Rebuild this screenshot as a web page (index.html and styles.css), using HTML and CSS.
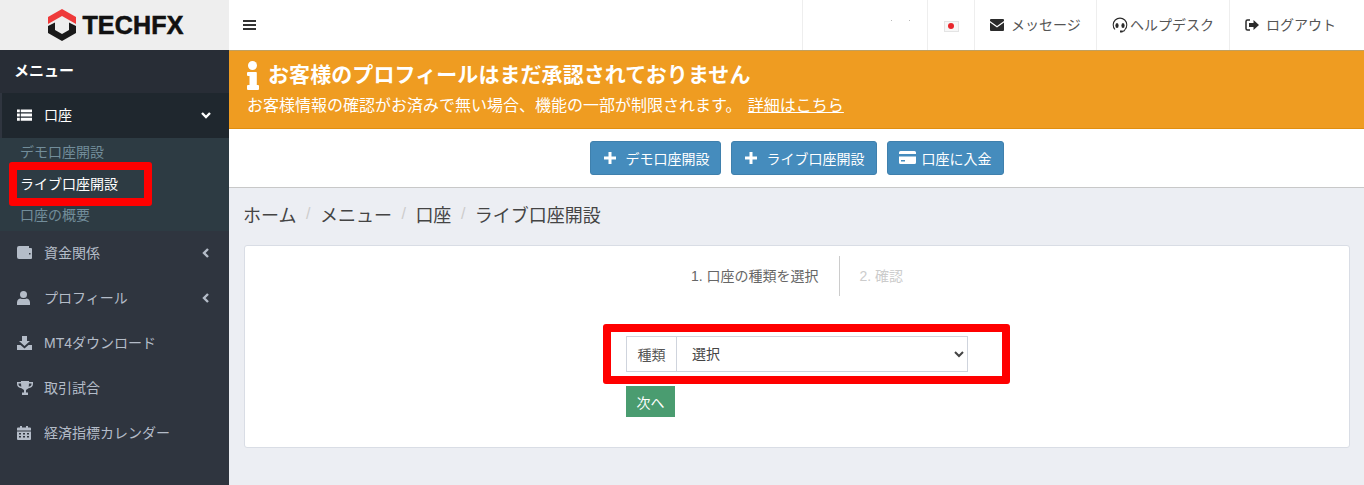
FILE: index.html
```html
<!DOCTYPE html>
<html lang="ja">
<head>
<meta charset="utf-8">
<title>TECHFX</title>
<link rel="stylesheet" href="styles.css">
</head>
<body>
<div class="app">
  <aside class="sidebar">
    <div class="logo">
      <svg class="logo-mark" width="28" height="32" viewBox="0 0 28 32">
        <path fill="#ee3a3a" d="M14 0 28 8V15L14 7 0 15V8Z"/>
        <path fill="#1a1a1a" d="M0 17 7 13.500V21L14 25 21 21V13.500L28 17V24L14 32 0 24Z"/>
      </svg>
      <span class="logo-text">TECHFX</span>
    </div>
    <div class="menu-title">メニュー</div>
    <div class="nav-item open">
      <svg class="ico" viewBox="0 0 16 14" width="15" height="14"><path fill="currentColor" d="M0 1h3v3H0zM4 1h12v3H4zM0 5.500h3v3H0zM4 5.500h12v3H4zM0 10h3v3H0zM4 10h12v3H4z"/></svg>
      <span class="nav-label">口座</span>
      <svg class="chev" viewBox="0 0 10 10" width="10" height="10"><path fill="none" stroke="currentColor" stroke-width="2.400" d="M1 3 5 7 9 3"/></svg>
    </div>
    <div class="submenu">
      <a class="sub-link">デモ口座開設</a>
      <a class="sub-link active">ライブ口座開設</a>
      <a class="sub-link">口座の概要</a>
    </div>
    <div class="nav-item">
      <svg class="ico" viewBox="0 0 15 14" width="15" height="14"><path fill="currentColor" d="M2 0h10v2h2a1 1 0 0 1 1 1v9a1 1 0 0 1-1 1H2a2 2 0 0 1-2-2V2a2 2 0 0 1 2-2zM12 7v1.500h1.500V7z"/></svg>
      <span class="nav-label">資金関係</span>
      <svg class="chev" viewBox="0 0 10 10" width="10" height="10"><path fill="none" stroke="currentColor" stroke-width="2.400" d="M7 1 3 5 7 9"/></svg>
    </div>
    <div class="nav-item">
      <svg class="ico" viewBox="0 0 15 14" width="15" height="14"><circle fill="currentColor" cx="6.500" cy="3.500" r="3.500"/><path fill="currentColor" d="M0 14v-2.500C0 9 2 7.500 3.500 7.500c1 .7 5 .7 6 0C11 7.500 13 9 13 11.500V14z"/></svg>
      <span class="nav-label">プロフィール</span>
      <svg class="chev" viewBox="0 0 10 10" width="10" height="10"><path fill="none" stroke="currentColor" stroke-width="2.400" d="M7 1 3 5 7 9"/></svg>
    </div>
    <div class="nav-item">
      <svg class="ico" viewBox="0 0 15 14" width="15" height="14"><path fill="currentColor" d="M5 0h5v5h3L7.500 10 2 5h3zM0 9h3.500l4 3.500 4-3.500H15v5H0z"/></svg>
      <span class="nav-label">MT4ダウンロード</span>
    </div>
    <div class="nav-item">
      <svg class="ico" viewBox="0 0 16 14" width="16" height="14"><path fill="currentColor" d="M4 0h8v1h4v2c0 2.500-2 4-4.500 4.300L9 9v2.500h2V14H5v-2.500h2V9L4.500 7.300C2 7 0 5.500 0 3V1h4zM1.500 2.500V3c0 1.500 1 2.300 2.800 2.700L4 2.500zM12 2.500l-.3 3.200C13.500 5.300 14.500 4.500 14.500 3v-.5z"/></svg>
      <span class="nav-label">取引試合</span>
    </div>
    <div class="nav-item">
      <svg class="ico" viewBox="0 0 14 14" width="14" height="14"><path fill="currentColor" d="M3 0h2v1.500h4V0h2v1.500h2a1 1 0 0 1 1 1V4.500H0V2.500a1 1 0 0 1 1-1h2zM0 5.500h14V13a1 1 0 0 1-1 1H1a1 1 0 0 1-1-1zM2 7v1.500h2V7zM6 7v1.500h2V7zM10 7v1.500h2V7zM2 10v1.500h2V10zM6 10v1.500h2V10zM10 10v1.500h2V10z"/></svg>
      <span class="nav-label">経済指標カレンダー</span>
    </div>
  </aside>

  <main class="main">
    <header class="topbar">
      <svg class="burger" viewBox="0 0 13 12" width="13" height="12"><path fill="#333" d="M0 1h13v2H0zM0 5h13v2H0zM0 9h13v2H0z"/></svg>
      <nav class="top-items">
        <div class="top-item user"><span class="speck"></span><span class="speck"></span></div>
        <div class="top-item flag-cell">
          <span class="flag"><span class="flag-dot"></span></span>
        </div>
        <div class="top-item msg">
          <svg viewBox="0 0 14 12" width="14" height="12"><path fill="#2b2b2b" d="M1 0h12a1 1 0 0 1 1 1v1L7 7 0 2V1a1 1 0 0 1 1-1zM0 3.500 7 8.500l7-5V11a1 1 0 0 1-1 1H1a1 1 0 0 1-1-1z"/></svg>
          <span class="top-label">メッセージ</span>
        </div>
        <div class="top-item help">
          <svg viewBox="0 0 16 16" width="16" height="16"><path fill="none" stroke="#2b2b2b" stroke-width="1.100" d="M3 12.500A6.800 6.800 0 1 1 13 12.500"/><ellipse fill="#2b2b2b" cx="5" cy="8.500" rx="1.600" ry="2.600"/><ellipse fill="#2b2b2b" cx="11" cy="8.500" rx="1.600" ry="2.600"/><path fill="none" stroke="#2b2b2b" stroke-width="1.100" d="M13 12.500C12.500 14 11.500 14.500 10 14.500"/><path fill="#2b2b2b" d="M8 13.500h2.500V15.500H8z"/></svg>
          <span class="top-label help-label">ヘルプデスク</span>
        </div>
        <div class="top-item logout">
          <svg viewBox="0 0 14 12" width="14" height="12"><path fill="none" stroke="#2b2b2b" stroke-width="1.500" d="M5 1H2.500A1.500 1.500 0 0 0 1 2.500v7A1.500 1.500 0 0 0 2.500 11H5"/><path fill="#2b2b2b" d="M4 4h4.500V1L14 6 8.500 11V8H4z"/></svg>
          <span class="top-label">ログアウト</span>
        </div>
      </nav>
    </header>

    <section class="alert">
      <h2 class="alert-title">
        <svg class="alert-i" viewBox="0 0 12 29" width="12" height="29"><circle fill="#fff" cx="5.500" cy="4.500" r="4.500"/><path fill="#fff" d="M1 11h8a.8.8 0 0 1 .8.8V24H11a1 1 0 0 1 1 1v3a1 1 0 0 1-1 1H1a1 1 0 0 1-1-1v-3a1 1 0 0 1 1-1h1.500V15H1a1 1 0 0 1-1-1v-2a1 1 0 0 1 1-1z"/></svg>
        お客様のプロフィールはまだ承認されておりません
      </h2>
      <p class="alert-text">お客様情報の確認がお済みで無い場合、機能の一部が制限されます。 <a class="alert-link">詳細はこちら</a></p>
    </section>

    <section class="toolbar">
      <a class="btn btn-demo"><svg viewBox="0 0 12 12" width="12" height="12"><path fill="#fff" d="M4.500 0h3v4.500H12v3H7.500V12h-3V7.500H0v-3h4.500z"/></svg><span class="btn-gap">デモ口座開設</span></a>
      <a class="btn"><svg viewBox="0 0 12 12" width="12" height="12"><path fill="#fff" d="M4.500 0h3v4.500H12v3H7.500V12h-3V7.500H0v-3h4.500z"/></svg><span class="btn-gap">ライブ口座開設</span></a>
      <a class="btn btn-deposit"><svg viewBox="0 0 17 13" width="17" height="13"><path fill="#fff" d="M1.500 0h14A1.500 1.500 0 0 1 17 1.500V3H0V1.500A1.500 1.500 0 0 1 1.500 0zM0 5.500h17v6a1.500 1.500 0 0 1-1.500 1.500h-14A1.500 1.500 0 0 1 0 11.500zM2 9v1.500h4V9z"/></svg><span class="btn-gap-s">口座に入金</span></a>
    </section>

    <nav class="crumbs">
      <span>ホーム</span><i>/</i><span>メニュー</span><i>/</i><span>口座</span><i>/</i><span>ライブ口座開設</span>
    </nav>

    <section class="card">
      <div class="steps">
        <div class="step current">1. 口座の種類を選択</div>
        <div class="step next">2. 確認</div>
      </div>
      <form class="form">
        <div class="input-group">
          <span class="addon">種類</span>
          <select class="select"><option>選択</option></select>
        </div>
        <button class="next-btn" type="button">次へ</button>
      </form>
    </section>
  </main>
</div>
<div class="mark mark-side"></div>
<div class="mark mark-form"></div>
</body>
</html>
```
FILE: styles.css
```css
* { box-sizing: border-box; }
html, body { margin: 0; height: 100%; overflow: hidden; }
body {
  font-family: "Liberation Sans", "Noto Sans CJK JP", sans-serif;
  font-size: 14px;
  color: #333;
  background: #eceef3;
}
.app { display: flex; height: 485px; }

/* sidebar */
.sidebar { width: 229px; flex: none; background: #2f353f; color: #a7b1c2; }
.logo {
  height: 50px;
  background: #eeeeee;
  display: flex;
  align-items: center;
  justify-content: center;
  gap: 6px;
  padding-left: 3px;
}
.logo-mark { display: block; }
.logo-text {
  font-family: "Liberation Sans", sans-serif;
  font-weight: 700;
  font-size: 25px;
  letter-spacing: .2px;
  color: #111;
  -webkit-text-stroke: .6px #111;
}
.menu-title {
  height: 43px;
  padding-left: 14px;
  line-height: 41px;
  font-weight: 700;
  font-size: 15px;
  color: #fff;
  background: #282d36;
}
.nav-item {
  height: 45px;
  display: grid;
  grid-template-columns: 15px 1fr auto;
  column-gap: 12px;
  align-items: center;
  padding: 0 18px 0 17px;
  color: #b4bcc8;
}
.nav-item.open { background: #1f272e; color: #fff; margin-left: 2px; padding-left: 15px; }
.ico { display: block; margin-bottom: 1px; }
.nav-label { white-space: nowrap; margin-bottom: 3px; }
.chev { display: block; margin-bottom: 1px; }
.submenu {
  background: #2d3b43;
  height: 93px;
  padding: 4px 0 5px 20px;
  display: flex;
  flex-direction: column;
  justify-content: space-between;
}
.sub-link { display: block; line-height: 21px; color: #728d9a; }
.sub-link.active { color: #fff; }

/* main */
.main { flex: 1; min-width: 0; display: flex; flex-direction: column; }
.topbar {
  height: 51px;
  flex: none;
  background: #fff;
  display: flex;
  align-items: center;
  justify-content: space-between;
  padding-left: 14px;
  border-bottom: 1px solid #c0a060;
}
.burger { display: block; }
.top-items { display: flex; height: 100%; }
.top-item {
  display: flex;
  align-items: center;
  border-left: 1px solid #eeeeee;
  height: 100%;
  color: #555;
}
.user { width: 125px; padding: 0 17px 10px 88px; gap: 17px; }
.speck { width: 2px; height: 1px; background: #bbb; }
.flag-cell { width: 47px; justify-content: center; }
.flag {
  width: 15px;
  height: 11px;
  background: #f7f7f7;
  border: 1px solid #e4e4e4;
  display: flex;
  align-items: center;
  justify-content: center;
  margin-top: 2px;
}
.flag-dot { width: 6px; height: 6px; border-radius: 50%; background: #e8262c; }
.msg { width: 122px; padding-left: 15px; }
.help { width: 133px; padding-left: 15px; }
.logout { width: 135px; padding-left: 15px; }
.top-label { margin-left: 7px; padding-bottom: 2px; }
.help-label { margin-left: 2px; }

/* alert */
.alert {
  height: 78px;
  flex: none;
  background: #ef9c21;
  color: #fff;
  padding: 9px 18px 0;
  border-bottom: 1px solid #e08e10;
}
.alert-title {
  margin: 0;
  display: flex;
  align-items: center;
  font-size: 21px;
  line-height: 30px;
  font-weight: 700;
  letter-spacing: .08px;
}
.alert-i { flex: none; margin-right: 9px; }
.alert-text { margin: 4px 0 0; font-size: 16px; line-height: 24px; }
.alert-link { text-decoration: underline; margin-left: 2px; }

/* toolbar */
.toolbar {
  height: 59px;
  flex: none;
  background: #fff;
  border-bottom: 1px solid #c8c8c8;
  display: flex;
  justify-content: center;
  align-items: center;
  gap: 10px;
  padding-bottom: 1px;
}
.btn {
  height: 34px;
  display: flex;
  align-items: center;
  padding: 0 11px 0 13px;
  background: #458cbd;
  border: 1px solid #3f80ad;
  border-radius: 3px;
  color: #fff;
  white-space: nowrap;
}
.btn-demo { padding-right: 10px; }
.btn-deposit { padding-left: 11px; }
.btn-gap { margin-left: 10px; }
.btn-gap-s { margin-left: 6px; }

/* breadcrumb */
.crumbs {
  flex: none;
  height: 57px;
  display: flex;
  align-items: center;
  padding: 0 0 5px 14px;
  font-size: 18px;
  color: #444;
}
.crumbs i { font-style: normal; color: #ccc; margin: 0 9.500px; font-size: 16px; }

/* card */
.card {
  margin: 0 14px 0 15px;
  height: 203px;
  background: #fff;
  border: 1px solid #d9dde5;
  border-radius: 3px;
  flex: none;
}
.steps {
  display: flex;
  justify-content: center;
  margin-top: 10px;
  height: 40px;
}
.step { line-height: 40px; font-size: 14px; }
.step.current { color: #666; padding-right: 20px; border-right: 1px solid #ccc; }
.step.next { color: #ccc; padding-left: 20px; }
.form { margin: 40px 0 0 381px; width: 342px; }
.input-group { display: flex; height: 36px; border: 1px solid #cfd4dd; }
.addon {
  width: 50px;
  flex: none;
  border-right: 1px solid #cfd4dd;
  display: flex;
  align-items: center;
  justify-content: center;
  color: #555;
}
.select {
  flex: 1;
  min-width: 0;
  border: 0;
  background: #fff;
  padding: 0 0 0 11px;
  font: inherit;
  color: #444;
  outline: none;
}
.next-btn {
  display: block;
  margin-top: 14px;
  width: 49px;
  height: 31px;
  background: #4a9c70;
  border: 0;
  color: #fff;
  font: inherit;
  padding: 0;
}

/* annotation marks */
.mark { position: absolute; border: 8px solid #ff0000; border-radius: 3px; pointer-events: none; }
.mark-side { left: 9px; top: 162px; width: 143px; height: 44px; }
.mark-form { left: 603px; top: 324px; width: 407px; height: 60px; }
```
